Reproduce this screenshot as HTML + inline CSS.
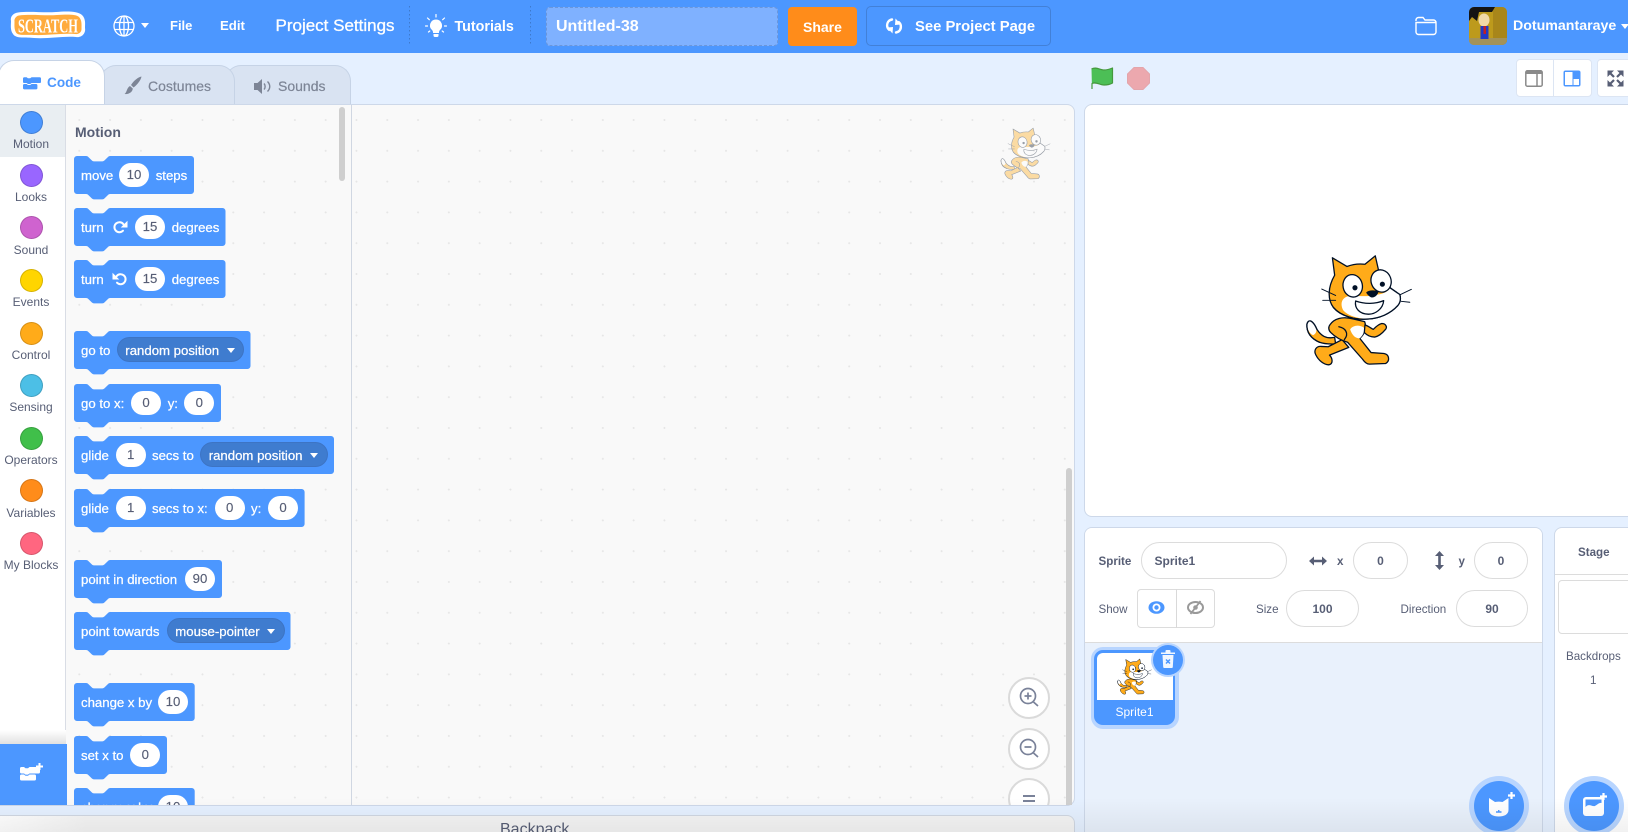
<!DOCTYPE html>
<html><head><meta charset="utf-8"><title>Scratch</title>
<style>
*{box-sizing:border-box}
html,body{margin:0;padding:0;width:1628px;height:832px;overflow:hidden;background:#e5f0ff}
body{font-family:"Liberation Sans",Arial,sans-serif;position:relative;color:#575e75}
.a{position:absolute}
.tx{position:absolute;white-space:nowrap}
.w{color:#fff;font-weight:bold;font-size:14px;line-height:20px;top:17px}
.dot{position:absolute;top:6px;height:40px;width:1px;background:repeating-linear-gradient(rgba(0,0,0,.2) 0 1.5px,transparent 1.5px 4px)}
.cat{position:absolute;width:62px;text-align:center;left:0;font-size:12px;line-height:14px;color:#575e75}
.circ{position:absolute;left:20px;width:23px;height:23px;border-radius:50%;border:1px solid rgba(0,0,0,.16)}
.b{position:absolute;left:0;height:45px;width:351px}
.b svg{position:absolute;left:74px;top:0;overflow:visible}
.bp{fill:#4c97ff}
.l{position:absolute;top:11px;line-height:18px;font-size:13.2px;color:#fff;white-space:nowrap;-webkit-text-stroke:.25px #fff}
.o{position:absolute;top:7px;width:30px;height:24px;background:#fff;border-radius:12px;text-align:center;font-size:13.2px;line-height:24px;color:#575e75;-webkit-text-stroke:.15px #575e75}
.d{position:absolute;top:6px;height:25px;border-radius:13px;background:#3f7ccf;border:1px solid #3d74c4}
.c{position:absolute;top:17px;width:0;height:0;border-left:4.5px solid transparent;border-right:4.5px solid transparent;border-top:5px solid #fff}
.inp{position:absolute;background:#fff;border:1px solid #dcdcdc;border-radius:19px;font-weight:bold;font-size:12px;line-height:37px;color:#575e75;text-align:center}
.lb{position:absolute;font-size:11.6px;line-height:14px;color:#575e75;white-space:nowrap}
</style></head><body>
<svg width="0" height="0" style="position:absolute"><defs>
<symbol id="scat" viewBox="100 65 335 350">
<g stroke="#001026" stroke-width="4" stroke-linejoin="round" stroke-linecap="round">
<path d="M192 325C165 330 150 320 137 300C127 277 112 263 106 284C104 310 120 330 145 340C162 346 178 346 195 345Z" fill="#ffab19"/>
<path d="M108 272C104 295 112 312 125 318C134 314 136 306 135 300C126 278 114 264 108 272Z" fill="#fff" stroke="none"/>
<path d="M106 284C104 310 120 330 145 340M137 300C127 277 112 263 106 284" fill="none"/>
<path d="M215 332L172 354L150 353C134 352 126 366 134 380C142 396 158 410 174 410C188 408 186 390 176 380L236 356Z" fill="#ffab19"/>
<path d="M178 285C190 268 215 258 250 268L285 276C292 295 285 315 270 328L305 372L345 375C362 378 364 398 350 406L300 408C292 408 285 402 278 392L232 340C215 335 195 325 180 310C172 302 172 292 178 285Z" fill="#ffab19"/>
<path d="M240 300C248 288 266 284 282 294C286 304 282 316 270 328C256 328 246 318 240 300Z" fill="#fff" stroke="none"/>
<path d="M205 292C225 296 238 312 222 332" fill="none"/>
<path d="M286 286C298 290 306 298 312 300C320 292 328 284 338 282C350 282 356 292 350 300C340 312 328 322 316 324C304 324 292 318 284 310Z" fill="#ffab19"/>
<path d="M185 78L230 105C248 98 268 96 286 98L318 72L328 116C345 128 360 148 365 172L394 192C398 205 396 216 388 226C365 252 330 266 296 268C255 272 210 258 188 232C170 208 170 170 192 132Z" fill="#ffab19"/>
<path d="M364 172L394 192C398 205 396 216 388 226C365 252 330 266 296 267C268 268 232 258 218 240C208 220 214 200 238 196C260 194 290 202 320 192C340 192 355 184 364 172Z" fill="#fff" stroke="none"/>
<path d="M365 172L394 192C398 205 396 216 388 226C365 252 330 266 296 268C255 272 210 258 188 232" fill="none"/>
<ellipse cx="248" cy="165" rx="30" ry="35" fill="#fff" transform="rotate(-12 248 165)"/>
<ellipse cx="336" cy="150" rx="31" ry="35" fill="#fff" transform="rotate(-20 336 150)"/>
<circle cx="255" cy="171" r="6" fill="#001026"/><circle cx="340" cy="160" r="6" fill="#001026"/>
<path d="M292 186C300 180 318 180 326 184C322 196 312 200 306 199C300 196 296 192 292 186Z" fill="#001026"/>
<path d="M257 212C285 222 318 222 344 211C342 236 318 254 296 253C270 252 253 236 257 212Z" fill="#fff"/>
<path d="M152 175L195 195M155 210L195 210M396 192L430 176M398 213L425 216" fill="none" stroke-width="3"/>
</g></symbol>
<symbol id="ccode" viewBox="0 0 20 14"><path d="M0 1.5A1.5 1.5 0 0 1 1.5 0H4L5.5 1.2H8L9.5 0H18.5A1.5 1.5 0 0 1 20 1.5V5A1.5 1.5 0 0 1 18.5 6.5H9.5L8 7.6H5.5L4 6.5H1.5A1.5 1.5 0 0 1 0 5ZM0 9A1.5 1.5 0 0 1 1.5 7.500H4L5.500 8.700H8L9.500 7.500H14.5A1.5 1.5 0 0 1 16 9V12A1.5 1.5 0 0 1 14.5 13.5H1.5A1.5 1.5 0 0 1 0 12Z"/></symbol>
</defs></svg>

<!-- header -->
<div class="a" style="left:0;top:0;width:1628px;height:53px;background:#4c97ff"></div>
<svg class="a" style="left:10px;top:11px" width="76" height="28" viewBox="0 0 76 28">
<path d="M8 1.5C20 0 34 2 46 1C56 0 68 0 72 4C76 8 75 13 75 17C76 22 72 27 66 26C52 25 38 28 24 27C16 26 6 28 3 23C0 19 1 14 1 10C0 6 3 2 8 1.5Z" fill="#fff"/>
<path d="M9 4.500C22 3 36 5 47 4C56 3.500 66 3 69 6C72 9 71.500 14 71.500 17C72 21 69 23.500 65 23C52 22 38 24.500 24 24C16 23.500 8 25 6 21.500C4 18 4.500 14 4.500 10.500C4 8 6 5 9 4.500Z" fill="#ffab3d"/>
<text x="38" y="21.500" text-anchor="middle" font-family="Liberation Serif" font-weight="bold" font-size="20" fill="#fff" textLength="60" lengthAdjust="spacingAndGlyphs">SCRATCH</text>
</svg>
<svg class="a" style="left:113px;top:15px" width="22" height="22" viewBox="0 0 22 22" fill="none" stroke="#fff" stroke-width="1.3"><circle cx="11" cy="11" r="10"/><ellipse cx="11" cy="11" rx="4.5" ry="10"/><path d="M11 1V21M1.5 7.5H20.5M1.5 14.5H20.5"/></svg>
<div class="a" style="left:140.5px;top:23px;border-left:4.5px solid transparent;border-right:4.5px solid transparent;border-top:5px solid #fff"></div>
<div class="tx w" style="left:170px;font-size:13px;top:16px">File</div>
<div class="tx w" style="left:220px;font-size:13.2px;top:16px">Edit</div>
<div class="tx" style="left:275.5px;top:16px;line-height:20px;font-size:17px;color:#fff;-webkit-text-stroke:.3px #fff">Project Settings</div>
<div class="dot" style="left:409px"></div>
<svg class="a" style="left:425px;top:14px" width="22" height="24" viewBox="0 0 22 24" fill="#fff"><path d="M11 5.500A6 6 0 0 1 15 16C14 17 14 18 14 19H8C8 18 8 17 7 16A6 6 0 0 1 11 5.500ZM8.500 20H13.500V21.500A1.500 1.500 0 0 1 12 23H10A1.500 1.500 0 0 1 8.500 21.500Z"/><path d="M11 .5V3M2.500 4L4.300 5.700M19.500 4L17.700 5.700M.5 12H2.500M19.500 12H21.500M3.500 18L4.800 17M18.500 18L17.200 17" stroke="#fff" stroke-width="1.200" stroke-linecap="round" fill="none"/></svg>
<div class="tx w" style="left:454.5px;font-size:14.3px">Tutorials</div>
<div class="dot" style="left:530px"></div>
<div class="a" style="left:546px;top:7px;width:232px;height:39px;background:#7fb1ff;border:1px dashed rgba(0,0,0,.15);border-radius:4px"></div>
<div class="tx" style="left:556px;top:17px;line-height:20px;font-size:16px;font-weight:bold;color:#fff">Untitled-38</div>
<div class="a" style="left:788px;top:7px;width:69px;height:38.5px;background:#ff8c1a;border-radius:4px"></div>
<div class="tx w" style="left:803px">Share</div>
<div class="a" style="left:866px;top:6px;width:185px;height:40px;border:1px solid #4280d7;border-radius:5px"></div>
<svg class="a" style="left:885px;top:17px" width="18" height="18" viewBox="0 0 18 18"><path d="M7 2.500C3.500 3 1.700 6 2.200 9.500C2.500 11 3.200 12 4.200 12.800" fill="none" stroke="#fff" stroke-width="2.400" stroke-linecap="round"/><path d="M2 10.500L8 10L7.500 16.500Z" fill="#fff"/><path d="M11 15.500C14.500 15 16.300 12 15.800 8.500C15.500 7 14.800 6 13.800 5.200" fill="none" stroke="#fff" stroke-width="2.400" stroke-linecap="round"/><path d="M16 7.500L10 8L10.500 1.500Z" fill="#fff"/></svg>
<div class="tx w" style="left:915px;font-size:14.8px">See Project Page</div>
<svg class="a" style="left:1415px;top:16px" width="22" height="20" viewBox="0 0 22 20" fill="none" stroke="#fff" stroke-width="1.4"><path d="M1 5V4A2.500 2.500 0 0 1 3.500 1.500H8L10 4H18.500A2.500 2.500 0 0 1 21 6.500V16A2.500 2.500 0 0 1 18.500 18.500H3.500A2.500 2.500 0 0 1 1 16V6.500H21"/></svg>
<svg class="a" style="left:1469px;top:7px;border-radius:5px" width="38" height="38" viewBox="0 0 38 38"><rect width="38" height="38" fill="#bd9a1c"/><rect x="24" y="0" width="14" height="38" fill="#a8861a"/><path d="M0 0H26L23 5H10L8 14L3 10L0 14Z" fill="#141414"/><path d="M0 31H38V38H0Z" fill="#a39258"/><ellipse cx="15" cy="13" rx="5.5" ry="6.5" fill="#f1d9a7"/><rect x="11.500" y="19" width="8" height="13" fill="#2139c4"/><rect x="14.500" y="19" width="2.500" height="8" fill="#c21f1f"/></svg>
<div class="tx w" style="left:1513px;font-size:14.2px;top:16px">Dotumantaraye</div>
<div class="a" style="left:1621px;top:24px;border-left:4.5px solid transparent;border-right:4.5px solid transparent;border-top:5px solid #fff"></div>

<!-- tabs -->
<div class="a" style="left:225px;top:65px;width:126px;height:40px;background:#d9e3f2;border:1px solid #c6d3e6;border-bottom:0;border-radius:16px 16px 0 0"></div>
<div class="a" style="left:100px;top:65px;width:135px;height:40px;background:#d9e3f2;border:1px solid #c6d3e6;border-bottom:0;border-radius:16px 16px 0 0"></div>
<div class="a" style="left:-2px;top:60px;width:107px;height:45px;background:#fff;border:1px solid #c6d3e6;border-bottom:0;border-radius:16px 16px 0 0"></div>
<svg class="a" style="left:23px;top:77px;fill:#4c97ff" width="18" height="13"><use href="#ccode"/></svg>
<div class="tx" style="left:47px;top:73px;line-height:20px;font-size:13.6px;font-weight:bold;color:#4c97ff">Code</div>
<svg class="a" style="left:124px;top:76px" width="18" height="19" viewBox="0 0 18 19" fill="#7d8596"><path d="M17.500 .5C17 4 13 9 9.500 11.500L7 9C9.500 5 14 1 17.500 .5Z"/><path d="M6 10L8.800 12.500C8.500 16 5 18.500 .5 18C3 16.500 2.500 12 6 10Z"/></svg>
<div class="tx" style="left:148px;top:76px;line-height:20px;font-size:14px;color:#7d8596;-webkit-text-stroke:.2px #7d8596">Costumes</div>
<svg class="a" style="left:254px;top:78px" width="18" height="17" viewBox="0 0 18 17" fill="#7d8596"><path d="M0 5H3.500L8 1V16L3.500 12H0Z"/><path d="M10 5.500C11.500 7 11.500 10 10 11.500M13.500 3.500C16.500 6.500 16.500 10.500 13.500 13.500" fill="none" stroke="#7d8596" stroke-width="1.400"/></svg>
<div class="tx" style="left:278px;top:76px;line-height:20px;font-size:14px;color:#7d8596;-webkit-text-stroke:.2px #7d8596">Sounds</div>

<!-- workspace -->
<div class="a" style="left:0;top:104px;width:1075px;height:702px;background:#f9f9f9;border:1px solid #cdd8e9;border-left:0;border-radius:0 8px 8px 0;overflow:hidden;background-image:radial-gradient(circle at center,#e6e6e6 .8px,transparent 1.1px);background-size:30.8px 30.8px;background-position:2.3px -.4px"></div>
<div class="a" style="left:351px;top:105px;width:1px;height:700px;background:#d0d7e2"></div>
<div class="a" style="left:1066px;top:468px;width:6px;height:337px;background:#cfcfcf;border-radius:3px 3px 0 0"></div>
<svg class="a" style="left:1000px;top:127px;opacity:.38" width="51" height="53"><use href="#scat"/></svg>

<!-- zoom controls -->
<svg class="a" style="left:1005px;top:675px" width="46" height="130" viewBox="0 0 46 130" fill="none">
<g fill="#fff" stroke="#dadada" stroke-width="2"><circle cx="24" cy="23" r="20"/><circle cx="24" cy="74" r="20"/><circle cx="24" cy="124" r="20"/></g>
<g stroke="#7a8299" stroke-width="1.7"><circle cx="23" cy="21" r="7.500"/><path d="M28.500 27L33 31M19.500 21H26.500M23 17.500V24.500"/><circle cx="23" cy="72" r="7.500"/><path d="M28.500 78L33 82M19.500 72H26.500"/><path d="M18 121H30M18 126H30" stroke-width="2"/></g></svg>

<!-- category menu -->
<div class="a" style="left:0;top:105px;width:66px;height:640px;background:#fff;border-right:1px solid #d9dde5"></div>
<div class="a" style="left:0;top:105px;width:65px;height:52px;background:#e9eef2"></div>
<div class="circ" style="top:111px;background:#4c97ff"></div><div class="cat" style="top:137px">Motion</div>
<div class="circ" style="top:164px;background:#9966ff"></div><div class="cat" style="top:190px">Looks</div>
<div class="circ" style="top:216px;background:#cf63cf"></div><div class="cat" style="top:242.5px">Sound</div>
<div class="circ" style="top:269px;background:#ffd500"></div><div class="cat" style="top:295px">Events</div>
<div class="circ" style="top:322px;background:#ffab19"></div><div class="cat" style="top:348px">Control</div>
<div class="circ" style="top:374px;background:#4cbfe6"></div><div class="cat" style="top:400px">Sensing</div>
<div class="circ" style="top:427px;background:#40bf4a"></div><div class="cat" style="top:453px">Operators</div>
<div class="circ" style="top:479px;background:#ff8c1a"></div><div class="cat" style="top:505.5px">Variables</div>
<div class="circ" style="top:532px;background:#ff6680"></div><div class="cat" style="top:558px">My Blocks</div>
<div class="a" style="left:0;top:730px;width:66px;height:15px;background:linear-gradient(#fff,#dfdfdf)"></div>
<div class="a" style="left:0;top:744px;width:67px;height:61px;background:#4c97ff"></div>
<svg class="a" style="left:20px;top:762px;fill:#fff" width="24" height="22" viewBox="0 0 24 22"><use href="#ccode" x="0" y="5" width="20" height="14"/><path d="M19.500 1V8M16 4.500H23" stroke="#fff" stroke-width="2"/></svg>

<!-- flyout -->
<div class="tx" style="left:75px;top:122px;line-height:20px;font-size:14px;font-weight:bold;color:#575e75">Motion</div>
<div class="a" style="left:339px;top:107px;width:6px;height:74px;background:#cfcfcf;border-radius:3px"></div>
<div class="a" style="left:0;top:0;width:351px;height:832px;clip-path:inset(104px 0 27px 0)">

<div class="b" style="top:155.7px"><svg width="120" height="44"><path class="bp" d="M0,3A3,3 0 0 1 3,0H12c1.35,0 2,.7 2.7,1.35l2.7,2.7c.7,.7 1.35,1.35 2.7,1.35h8.1c1.35,0 2,-.7 2.7,-1.35l2.7,-2.7c.7,-.7 1.35,-1.35 2.7,-1.35H117a3,3 0 0 1 3,3V35a3,3 0 0 1 -3,3H36.3c-1.35,0 -2,.7 -2.7,1.35l-2.7,2.7c-.7,.7 -1.35,1.35 -2.7,1.35h-8.1c-1.35,0 -2,-.7 -2.7,-1.35l-2.7,-2.7c-.7,-.7 -1.35,-1.35 -2.7,-1.35H3a3,3 0 0 1 -3,-3Z"/></svg>
<span class="l" style="left:81px">move</span><span class="o" style="left:119px">10</span><span class="l" style="left:155.7px">steps</span></div>

<div class="b" style="top:208px"><svg width="152" height="44"><path class="bp" d="M0,3A3,3 0 0 1 3,0H12c1.35,0 2,.7 2.7,1.35l2.7,2.7c.7,.7 1.35,1.35 2.7,1.35h8.1c1.35,0 2,-.7 2.7,-1.35l2.7,-2.7c.7,-.7 1.35,-1.35 2.7,-1.35H148.5a3,3 0 0 1 3,3V35a3,3 0 0 1 -3,3H36.3c-1.35,0 -2,.7 -2.7,1.35l-2.7,2.7c-.7,.7 -1.35,1.35 -2.7,1.35h-8.1c-1.35,0 -2,-.7 -2.7,-1.35l-2.7,-2.7c-.7,-.7 -1.35,-1.35 -2.7,-1.35H3a3,3 0 0 1 -3,-3Z"/></svg>
<span class="l" style="left:81px">turn</span>
<svg style="left:112px;top:12px" width="16" height="14" viewBox="0 0 16 14" fill="none"><path d="M11.5 4.3A5 5 0 1 0 11 10.7" stroke="#fff" stroke-width="2" stroke-linecap="round"/><path d="M15.5 .7V7.5H8.7Z" fill="#fff"/></svg>
<span class="o" style="left:135px">15</span><span class="l" style="left:171.7px">degrees</span></div>

<div class="b" style="top:260.3px"><svg width="152" height="44"><path class="bp" d="M0,3A3,3 0 0 1 3,0H12c1.35,0 2,.7 2.7,1.35l2.7,2.7c.7,.7 1.35,1.35 2.7,1.35h8.1c1.35,0 2,-.7 2.7,-1.35l2.7,-2.7c.7,-.7 1.35,-1.35 2.7,-1.35H148.5a3,3 0 0 1 3,3V35a3,3 0 0 1 -3,3H36.3c-1.35,0 -2,.7 -2.7,1.35l-2.7,2.7c-.7,.7 -1.35,1.35 -2.7,1.35h-8.1c-1.35,0 -2,-.7 -2.7,-1.35l-2.7,-2.7c-.7,-.7 -1.35,-1.35 -2.7,-1.35H3a3,3 0 0 1 -3,-3Z"/></svg>
<span class="l" style="left:81px">turn</span>
<svg style="left:112px;top:12px" width="16" height="14" viewBox="0 0 16 14" fill="none"><path d="M4.5 4.3A5 5 0 1 1 5 10.7" stroke="#fff" stroke-width="2" stroke-linecap="round"/><path d="M.5 .7V7.5H7.3Z" fill="#fff"/></svg>
<span class="o" style="left:135px">15</span><span class="l" style="left:171.7px">degrees</span></div>

<div class="b" style="top:331.3px"><svg width="177" height="44"><path class="bp" d="M0,3A3,3 0 0 1 3,0H12c1.35,0 2,.7 2.7,1.35l2.7,2.7c.7,.7 1.35,1.35 2.7,1.35h8.1c1.35,0 2,-.7 2.7,-1.35l2.7,-2.7c.7,-.7 1.35,-1.35 2.7,-1.35H173.5a3,3 0 0 1 3,3V35a3,3 0 0 1 -3,3H36.3c-1.35,0 -2,.7 -2.7,1.35l-2.7,2.7c-.7,.7 -1.35,1.35 -2.7,1.35h-8.1c-1.35,0 -2,-.7 -2.7,-1.35l-2.7,-2.7c-.7,-.7 -1.35,-1.35 -2.7,-1.35H3a3,3 0 0 1 -3,-3Z"/></svg>
<span class="l" style="left:81px">go to</span><span class="d" style="left:116.7px;width:127.6px"></span><span class="l" style="left:125.3px">random position</span><span class="c" style="left:226.7px"></span></div>

<div class="b" style="top:384px"><svg width="147" height="44"><path class="bp" d="M0,3A3,3 0 0 1 3,0H12c1.35,0 2,.7 2.7,1.35l2.7,2.7c.7,.7 1.35,1.35 2.7,1.35h8.1c1.35,0 2,-.7 2.7,-1.35l2.7,-2.7c.7,-.7 1.35,-1.35 2.7,-1.35H144a3,3 0 0 1 3,3V35a3,3 0 0 1 -3,3H36.3c-1.35,0 -2,.7 -2.7,1.35l-2.7,2.7c-.7,.7 -1.35,1.35 -2.7,1.35h-8.1c-1.35,0 -2,-.7 -2.7,-1.35l-2.7,-2.7c-.7,-.7 -1.35,-1.35 -2.7,-1.35H3a3,3 0 0 1 -3,-3Z"/></svg>
<span class="l" style="left:81px">go to x:</span><span class="o" style="left:131px">0</span><span class="l" style="left:167.7px">y:</span><span class="o" style="left:184.3px">0</span></div>

<div class="b" style="top:436.3px"><svg width="260" height="44"><path class="bp" d="M0,3A3,3 0 0 1 3,0H12c1.35,0 2,.7 2.7,1.35l2.7,2.7c.7,.7 1.35,1.35 2.7,1.35h8.1c1.35,0 2,-.7 2.7,-1.35l2.7,-2.7c.7,-.7 1.35,-1.35 2.7,-1.35H257a3,3 0 0 1 3,3V35a3,3 0 0 1 -3,3H36.3c-1.35,0 -2,.7 -2.7,1.35l-2.7,2.7c-.7,.7 -1.35,1.35 -2.7,1.35h-8.1c-1.35,0 -2,-.7 -2.7,-1.35l-2.7,-2.7c-.7,-.7 -1.35,-1.35 -2.7,-1.35H3a3,3 0 0 1 -3,-3Z"/></svg>
<span class="l" style="left:81px">glide</span><span class="o" style="left:115.7px">1</span><span class="l" style="left:152px">secs to</span><span class="d" style="left:200px;width:127.7px"></span><span class="l" style="left:208.7px">random position</span><span class="c" style="left:310px"></span></div>

<div class="b" style="top:489px"><svg width="231" height="44"><path class="bp" d="M0,3A3,3 0 0 1 3,0H12c1.35,0 2,.7 2.7,1.35l2.7,2.7c.7,.7 1.35,1.35 2.7,1.35h8.1c1.35,0 2,-.7 2.7,-1.35l2.7,-2.7c.7,-.7 1.35,-1.35 2.7,-1.35H227.6a3,3 0 0 1 3,3V35a3,3 0 0 1 -3,3H36.3c-1.35,0 -2,.7 -2.7,1.35l-2.7,2.7c-.7,.7 -1.35,1.35 -2.7,1.35h-8.1c-1.35,0 -2,-.7 -2.7,-1.35l-2.7,-2.7c-.7,-.7 -1.35,-1.35 -2.7,-1.35H3a3,3 0 0 1 -3,-3Z"/></svg>
<span class="l" style="left:81px">glide</span><span class="o" style="left:115.7px">1</span><span class="l" style="left:152px">secs to x:</span><span class="o" style="left:214.7px">0</span><span class="l" style="left:251px">y:</span><span class="o" style="left:268px">0</span></div>

<div class="b" style="top:560px"><svg width="148" height="44"><path class="bp" d="M0,3A3,3 0 0 1 3,0H12c1.35,0 2,.7 2.7,1.35l2.7,2.7c.7,.7 1.35,1.35 2.7,1.35h8.1c1.35,0 2,-.7 2.7,-1.35l2.7,-2.7c.7,-.7 1.35,-1.35 2.7,-1.35H145a3,3 0 0 1 3,3V35a3,3 0 0 1 -3,3H36.3c-1.35,0 -2,.7 -2.7,1.35l-2.7,2.7c-.7,.7 -1.35,1.35 -2.7,1.35h-8.1c-1.35,0 -2,-.7 -2.7,-1.35l-2.7,-2.7c-.7,-.7 -1.35,-1.35 -2.7,-1.35H3a3,3 0 0 1 -3,-3Z"/></svg>
<span class="l" style="left:81px">point in direction</span><span class="o" style="left:185px">90</span></div>

<div class="b" style="top:612.3px"><svg width="217" height="44"><path class="bp" d="M0,3A3,3 0 0 1 3,0H12c1.35,0 2,.7 2.7,1.35l2.7,2.7c.7,.7 1.35,1.35 2.7,1.35h8.1c1.35,0 2,-.7 2.7,-1.35l2.7,-2.7c.7,-.7 1.35,-1.35 2.7,-1.35H213.5a3,3 0 0 1 3,3V35a3,3 0 0 1 -3,3H36.3c-1.35,0 -2,.7 -2.7,1.35l-2.7,2.7c-.7,.7 -1.35,1.35 -2.7,1.35h-8.1c-1.35,0 -2,-.7 -2.7,-1.35l-2.7,-2.7c-.7,-.7 -1.35,-1.35 -2.7,-1.35H3a3,3 0 0 1 -3,-3Z"/></svg>
<span class="l" style="left:81px">point towards</span><span class="d" style="left:166.7px;width:118.3px"></span><span class="l" style="left:175.3px">mouse-pointer</span><span class="c" style="left:266.7px"></span></div>

<div class="b" style="top:683.3px"><svg width="121" height="44"><path class="bp" d="M0,3A3,3 0 0 1 3,0H12c1.35,0 2,.7 2.7,1.35l2.7,2.7c.7,.7 1.35,1.35 2.7,1.35h8.1c1.35,0 2,-.7 2.7,-1.35l2.7,-2.7c.7,-.7 1.35,-1.35 2.7,-1.35H117.7a3,3 0 0 1 3,3V35a3,3 0 0 1 -3,3H36.3c-1.35,0 -2,.7 -2.7,1.35l-2.7,2.7c-.7,.7 -1.35,1.35 -2.7,1.35h-8.1c-1.35,0 -2,-.7 -2.7,-1.35l-2.7,-2.7c-.7,-.7 -1.35,-1.35 -2.7,-1.35H3a3,3 0 0 1 -3,-3Z"/></svg>
<span class="l" style="left:81px">change x by</span><span class="o" style="left:158px">10</span></div>

<div class="b" style="top:736px"><svg width="93" height="44"><path class="bp" d="M0,3A3,3 0 0 1 3,0H12c1.35,0 2,.7 2.7,1.35l2.7,2.7c.7,.7 1.35,1.35 2.7,1.35h8.1c1.35,0 2,-.7 2.7,-1.35l2.7,-2.7c.7,-.7 1.35,-1.35 2.7,-1.35H90a3,3 0 0 1 3,3V35a3,3 0 0 1 -3,3H36.3c-1.35,0 -2,.7 -2.7,1.35l-2.7,2.7c-.7,.7 -1.35,1.35 -2.7,1.35h-8.1c-1.35,0 -2,-.7 -2.7,-1.35l-2.7,-2.7c-.7,-.7 -1.35,-1.35 -2.7,-1.35H3a3,3 0 0 1 -3,-3Z"/></svg>
<span class="l" style="left:81px">set x to</span><span class="o" style="left:130.3px">0</span></div>

<div class="b" style="top:788.3px"><svg width="121" height="44"><path class="bp" d="M0,3A3,3 0 0 1 3,0H12c1.35,0 2,.7 2.7,1.35l2.7,2.7c.7,.7 1.35,1.35 2.7,1.35h8.1c1.35,0 2,-.7 2.7,-1.35l2.7,-2.7c.7,-.7 1.35,-1.35 2.7,-1.35H117.7a3,3 0 0 1 3,3V35a3,3 0 0 1 -3,3H3a3,3 0 0 1 -3,-3Z"/></svg>
<span class="l" style="left:81px">change y by</span><span class="o" style="left:158px">10</span></div>
</div>

<!-- backpack -->
<div class="a" style="left:0;top:815px;width:1075px;height:30px;background:linear-gradient(90deg,#fff,#f4f4f4 8%);border:1px solid #d0d7e2;border-left:0;border-radius:0 8px 0 0"></div>
<div class="tx" style="left:500px;top:821px;font-size:16px;line-height:18px;color:#575e75">Backpack</div>

<!-- stage controls -->
<svg class="a" style="left:1090px;top:66px" width="24" height="24" viewBox="0 0 24 24"><path d="M1.5 3C6 .5 10 4 14 4C17 4 20 3 22.5 2V17C20 18.5 17 19 14 19C10 19 6 15.5 2 17.5V23" fill="#4cbf56" stroke="#45993d" stroke-width="1.2" stroke-linejoin="round"/></svg>
<svg class="a" style="left:1127px;top:67px" width="23" height="23" viewBox="0 0 23 23"><path d="M7 .5H16L22.500 7V16L16 22.500H7L.5 16V7Z" fill="#eca8ae" stroke="#e3a5ab"/></svg>
<div class="a" style="left:1516px;top:59px;width:76px;height:38px;background:#fff;border:1px solid #dce5f3;border-radius:4px"></div>
<div class="a" style="left:1553px;top:59px;width:1px;height:38px;background:#dce5f3"></div>
<svg class="a" style="left:1525px;top:70px" width="18" height="17" viewBox="0 0 18 17" fill="none"><rect x=".8" y=".8" width="16.4" height="15.4" rx="1.5" stroke="#8a8a8a" stroke-width="1.5"/><rect x="1" y="1" width="16" height="3" fill="#8a8a8a"/><path d="M12 3V16" stroke="#8a8a8a" stroke-width="1.5"/></svg>
<svg class="a" style="left:1563px;top:70px" width="18" height="17" viewBox="0 0 18 17"><rect x=".5" y=".5" width="17" height="16" rx="2" fill="#4c97ff"/><rect x="2" y="2" width="7.5" height="13" fill="#fff"/><rect x="10.5" y="9" width="5.5" height="6" fill="#fff"/></svg>
<div class="a" style="left:1597px;top:59px;width:50px;height:38px;background:#fff;border:1px solid #dce5f3;border-radius:4px"></div>
<svg class="a" style="left:1607px;top:70px" width="17" height="17" viewBox="0 0 17 17" fill="#575e75" stroke="#575e75"><path d="M.5 .5H7L.5 7Z" stroke="none"/><path d="M16.500 .5V7L10 .5Z" stroke="none"/><path d="M.5 16.500V10L7 16.500Z" stroke="none"/><path d="M16.500 16.500H10L16.500 10Z" stroke="none"/><path d="M2 2L7 7M15 2L10 7M2 15L7 10M15 15L10 10" stroke-width="2.2" fill="none"/></svg>

<!-- stage -->
<div class="a" style="left:1084px;top:103.5px;width:600px;height:413px;background:#fff;border:1px solid #cdd8e9;border-radius:8px"></div>
<svg class="a" style="left:1305px;top:253px" width="108" height="114"><use href="#scat"/></svg>

<!-- sprite panel -->
<div class="a" style="left:1084px;top:526.5px;width:459px;height:320px;background:#e9f1fc;border:1px solid #cdd8e9;border-radius:8px 8px 0 0;overflow:hidden"><div style="background:#fff;height:115px;border-bottom:1px solid #dcdcdc"></div></div>
<div class="lb" style="left:1098.5px;top:554.5px;font-weight:bold">Sprite</div>
<div class="inp" style="left:1140.5px;top:542px;width:146px;height:37px;text-align:left;padding-left:13px">Sprite1</div>
<svg class="a" style="left:1309px;top:555px" width="18" height="12" viewBox="0 0 18 12" fill="#575e75"><path d="M0 6L5 1.5V4.800H13V1.5L18 6L13 10.5V7.200H5V10.5Z"/></svg>
<div class="lb" style="left:1337px;top:555px;font-weight:bold">x</div>
<div class="inp" style="left:1353px;top:542px;width:55px;height:37px">0</div>
<svg class="a" style="left:1435px;top:551px" width="9" height="19" viewBox="0 0 9 19" fill="#575e75"><path d="M4.500 0L9 5H5.800V14H9L4.500 19L0 14H3.200V5H0Z"/></svg>
<div class="lb" style="left:1458.5px;top:555px;font-weight:bold">y</div>
<div class="inp" style="left:1474px;top:542px;width:54px;height:37px">0</div>
<div class="lb" style="left:1098.5px;top:603px">Show</div>
<div class="a" style="left:1137px;top:589px;width:78px;height:39px;background:#fff;border:1px solid #dcdcdc;border-radius:4px"></div>
<div class="a" style="left:1175.5px;top:589px;width:1.5px;height:39px;background:#d9d9d9"></div>
<svg class="a" style="left:1148px;top:601px" width="17" height="13" viewBox="0 0 17 13"><ellipse cx="8.5" cy="6.5" rx="8" ry="6.3" fill="#4c97ff"/><circle cx="8.5" cy="6.5" r="4" fill="#fff"/><circle cx="8.5" cy="6.5" r="2.2" fill="#4c97ff"/></svg>
<svg class="a" style="left:1187px;top:600px" width="17" height="15" viewBox="0 0 17 15"><ellipse cx="8.5" cy="7.5" rx="7.5" ry="5.5" fill="none" stroke="#9a9a9a" stroke-width="2"/><circle cx="8.5" cy="7.5" r="2.3" fill="#9a9a9a"/><path d="M3.500 14L13.500 1" stroke="#9a9a9a" stroke-width="1.800"/></svg>
<div class="lb" style="left:1256px;top:603px">Size</div>
<div class="inp" style="left:1286px;top:590px;width:73px;height:37px">100</div>
<div class="lb" style="left:1400.5px;top:603px">Direction</div>
<div class="inp" style="left:1456px;top:590px;width:72px;height:37px">90</div>

<!-- sprite tile -->
<div class="a" style="left:1090.5px;top:647px;width:88px;height:82px;border-radius:12px;background:#b8d5ff"></div>
<div class="a" style="left:1094px;top:650px;width:81px;height:75px;background:#4c97ff;border-radius:9px"></div>
<div class="a" style="left:1096.5px;top:653px;width:76px;height:47px;background:#fff;border-radius:6px 6px 0 0"></div>
<svg class="a" style="left:1117px;top:658px" width="35" height="37"><use href="#scat"/></svg>
<div class="tx" style="left:1094px;width:81px;text-align:center;top:704px;font-size:12px;line-height:16px;color:#fff">Sprite1</div>
<div class="a" style="left:1151px;top:642.5px;width:34px;height:34px;border-radius:50%;background:#b8d5ff"></div>
<div class="a" style="left:1153px;top:644.5px;width:30px;height:30px;border-radius:50%;background:#4c97ff"></div>
<svg class="a" style="left:1160px;top:649px" width="16" height="20" viewBox="0 0 16 20" fill="#fff"><path d="M1 3.500H5.500V2A1 1 0 0 1 6.500 1H9.500A1 1 0 0 1 10.500 2V3.500H15V5H1ZM2.500 6H13.500L12.800 18A1 1 0 0 1 11.800 19H4.200A1 1 0 0 1 3.200 18Z" opacity=".92"/><path d="M6 10.500L10 14.500M10 10.500L6 14.500" stroke="#4c97ff" stroke-width="1.500"/></svg>

<!-- stage selector -->
<div class="a" style="left:1554px;top:526.5px;width:120px;height:320px;background:#fff;border:1px solid #cdd8e9;border-radius:8px 8px 0 0"></div>
<div class="a" style="left:1555px;top:574px;width:80px;height:1px;background:#dcdcdc"></div>
<div class="lb" style="left:1578px;top:545.5px;font-weight:bold">Stage</div>
<div class="a" style="left:1557.5px;top:580px;width:90px;height:54px;background:#fff;border:1px solid #dcdcdc;border-radius:4px"></div>
<div class="lb" style="left:1566px;top:650px">Backdrops</div>
<div class="lb" style="left:1590px;top:674px">1</div>

<!-- add buttons -->
<div class="a" style="left:1469px;top:776px;width:60px;height:60px;border-radius:50%;background:#b8d5ff"></div>
<div class="a" style="left:1474px;top:781px;width:50px;height:50px;border-radius:50%;background:#4c97ff"></div>
<svg class="a" style="left:1488px;top:791px" width="28" height="27" viewBox="0 0 28 27" fill="#fff"><path d="M1 7L7 11C9.500 10.500 12 10.500 14.500 11L20.500 7V19C20.500 23.500 16 25.500 10.750 25.500C5.500 25.500 1 23.500 1 19Z"/><path d="M23.500 1V8M20 4.500H27" stroke="#fff" stroke-width="2.200"/><path d="M8 21H13.500M10.750 19V21" stroke="#4c97ff" stroke-width="1.400"/></svg>
<div class="a" style="left:1564px;top:776px;width:60px;height:60px;border-radius:50%;background:#b8d5ff"></div>
<div class="a" style="left:1569px;top:781px;width:50px;height:50px;border-radius:50%;background:#4c97ff"></div>
<svg class="a" style="left:1582px;top:793px" width="26" height="24" viewBox="0 0 26 24"><rect x="1" y="4" width="21" height="19" rx="3" fill="#fff"/><rect x="3.500" y="6.500" width="16" height="8" fill="#4c97ff"/><path d="M3.500 14C7 10 10 14 13 13C15 12 17 9.500 19.500 10V16H3.500Z" fill="#fff"/><path d="M21.500 0V7M18 3.500H25" stroke="#fff" stroke-width="2.200"/></svg>

<!-- bottom shade -->
<div class="a" style="left:0;top:798px;width:1628px;height:34px;background:linear-gradient(rgba(0,0,0,0),rgba(0,0,0,.055));pointer-events:none"></div>
</body></html>
